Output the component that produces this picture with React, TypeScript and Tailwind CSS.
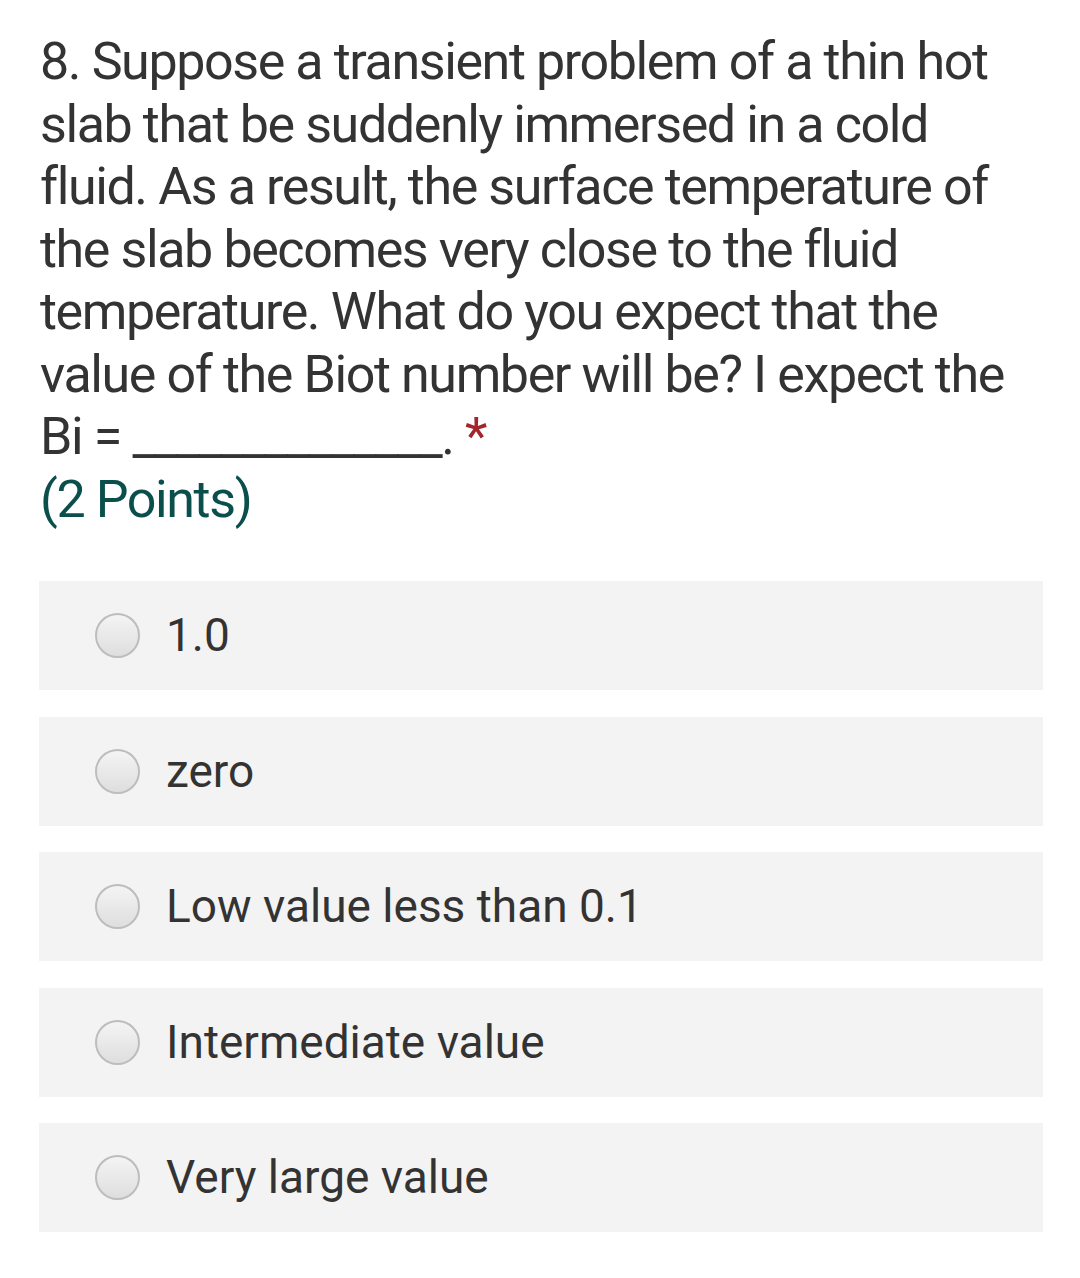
const options = ["1.0", "zero", "Low value less than 0.1", "Intermediate value", "Very large value"];

function Radio() {
  return (
    <span className="h-[45px] w-[45px] shrink-0 rounded-full border-2 border-[#bdbdbd] bg-gradient-to-b from-[#f4f4f4] to-[#dedede]" />
  );
}

export default function App() {
  return (
    <div className="min-h-[1278px] w-[1080px] bg-white font-['Roboto',sans-serif] text-[#333333]">
      <div className="px-[40px] pt-[31px] text-[52px] leading-[62.5px] tracking-[-1.4px]">
        <p>
          8. Suppose a transient problem of a thin hot slab that be suddenly immersed in a cold fluid. As a result, the
          surface temperature of the slab becomes very close to the fluid temperature. What do you expect that the value of
          the Biot number will be? I expect the
        </p>
        <p>
          Bi = ______________. <span className="text-[#a4262c]">*</span>
        </p>
        <p className="text-[#0b4f4c]">(2 Points)</p>
      </div>
      <div className="mt-[50px] flex flex-col gap-[26.5px] pl-[39px] pr-[37px]">
        {options.map((o) => (
          <div key={o} className="flex h-[109px] items-center gap-[26px] bg-[#f3f3f3] pl-[56px]">
            <Radio />
            <span className="text-[46px] text-[#333333]">{o}</span>
          </div>
        ))}
      </div>
    </div>
  );
}
